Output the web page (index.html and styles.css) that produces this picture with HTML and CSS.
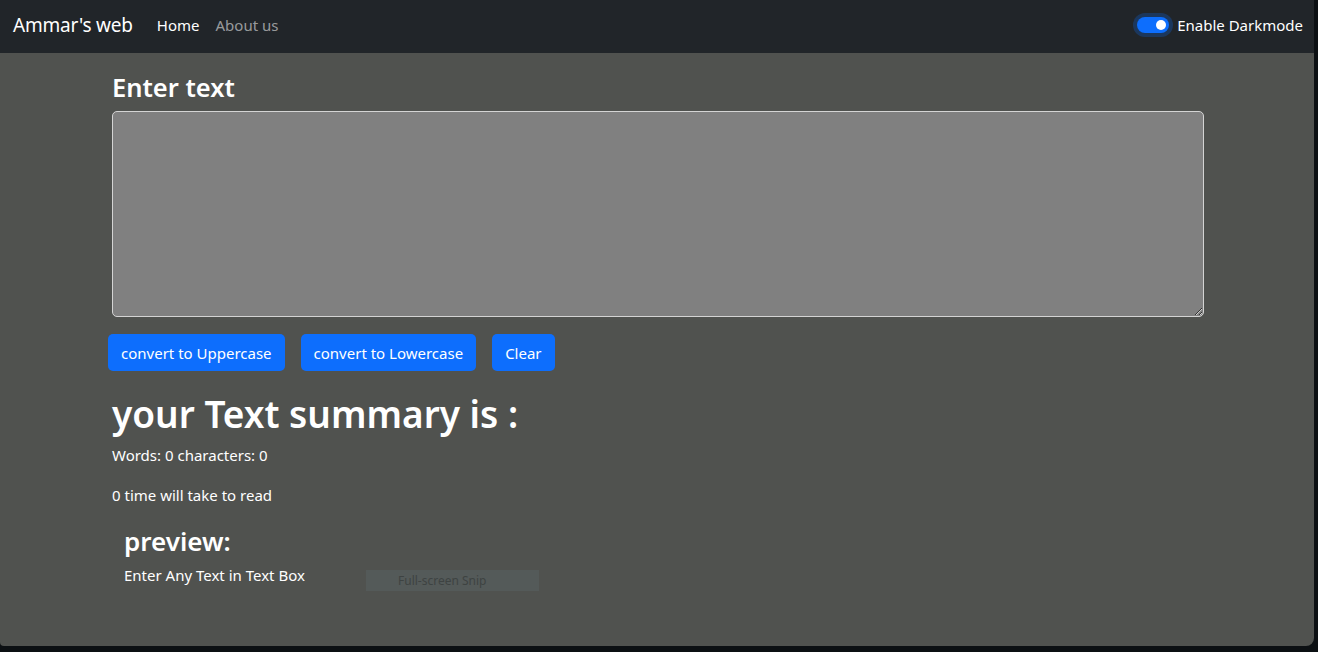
FILE: index.html
```html
<!DOCTYPE html>
<html>
<head>
<meta charset="utf-8">
<link rel="stylesheet" href="styles.css">
</head>
<body>
<div class="app">
  <nav class="navbar">
    <a class="brand">Ammar's web</a>
    <ul class="nav-links">
      <li class="active">Home</li>
      <li>About us</li>
    </ul>
    <label class="switch">
      <span class="track"><span class="knob"></span></span>
      <span class="switch-label">Enable Darkmode</span>
    </label>
  </nav>
  <main class="container">
    <h3 class="title">Enter text</h3>
    <textarea class="box"></textarea>
    <div class="buttons">
      <button class="btn">convert to Uppercase</button>
      <button class="btn">convert to Lowercase</button>
      <button class="btn">Clear</button>
    </div>
    <h1 class="summary">your Text summary is :</h1>
    <p class="line">Words: 0 characters: 0</p>
    <p class="line">0 time will take to read</p>
    <section class="preview">
      <h3 class="preview-title">preview:</h3>
      <p class="preview-text">Enter Any Text in Text Box</p>
    </section>
  </main>
  <div class="snip">Full-screen Snip</div>
</div>
</body>
</html>
```
FILE: styles.css
```css
* { box-sizing: border-box; }
html, body { margin: 0; padding: 0; }
body {
  width: 1318px;
  height: 652px;
  background: #0c1013;
  font-family: "Noto Sans", "Open Sans", sans-serif;
  color: #fff;
  overflow: hidden;
}
.app {
  position: relative;
  width: 1314px;
  height: 646px;
  background: #50524f;
  border-radius: 0 0 8px 4px;
  overflow: hidden;
}
.navbar {
  height: 53px;
  background: #212529;
  display: flex;
  align-items: center;
  padding: 0 11px 4px 13px;
}
.brand {
  font-size: 19px;
  color: #fff;
  margin-right: 24px;
  letter-spacing: -0.2px;
}
.nav-links {
  display: flex;
  list-style: none;
  margin: 0;
  padding: 0;
  gap: 16px;
  font-size: 15px;
  color: rgba(255,255,255,.55);
  flex: 1;
}
.nav-links .active { color: #fff; }
.switch {
  display: flex;
  align-items: center;
  gap: 8px;
  font-size: 15px;
}
.track {
  width: 32px;
  height: 16px;
  border-radius: 8px;
  background: #0d6efd;
  box-shadow: 0 0 0 4px rgba(13,110,253,.25);
  display: flex;
  align-items: center;
  justify-content: flex-end;
  padding-right: 3px;
}
.knob {
  width: 10px;
  height: 10px;
  border-radius: 50%;
  background: #fff;
}
.container {
  padding: 0 110px 0 112px;
  display: flex;
  flex-direction: column;
  align-items: flex-start;
}
.title {
  margin: 17px 0 7px;
  font-size: 25.5px;
  font-weight: 600;
  line-height: 34px;
}
.box {
  width: 1092px;
  height: 206px;
  background: #808080;
  border: 1px solid #d4d4d4;
  border-radius: 5px;
  margin: 0;
  display: block;
}
.buttons {
  display: flex;
  gap: 16px;
  margin: 17px 0 0 -4px;
}
.btn {
  font-family: inherit;
  height: 37px;
  font-size: 15px;
  color: #fff;
  background: #0d6efd;
  border: 0;
  border-radius: 5px;
  padding: 0 13px;
}
.summary {
  margin: 22px 0 0;
  font-size: 37px;
  font-weight: 600;
  line-height: 42px;
}
.line {
  margin: 9px 0 0;
  font-size: 15px;
  line-height: 22px;
}
.line + .line { margin-top: 18px; }
.preview {
  margin: 20px 0 0 12px;
}
.preview-title {
  margin: 0;
  font-size: 26px;
  font-weight: 600;
  line-height: 30px;
}
.preview-text {
  margin: 9px 0 0;
  font-size: 15px;
  line-height: 20px;
}
.snip {
  position: absolute;
  left: 366px;
  top: 570px;
  width: 173px;
  height: 21px;
  background: #545a59;
  color: #3e4342;
  font-size: 12px;
  line-height: 21px;
  padding-left: 32px;
}
```
